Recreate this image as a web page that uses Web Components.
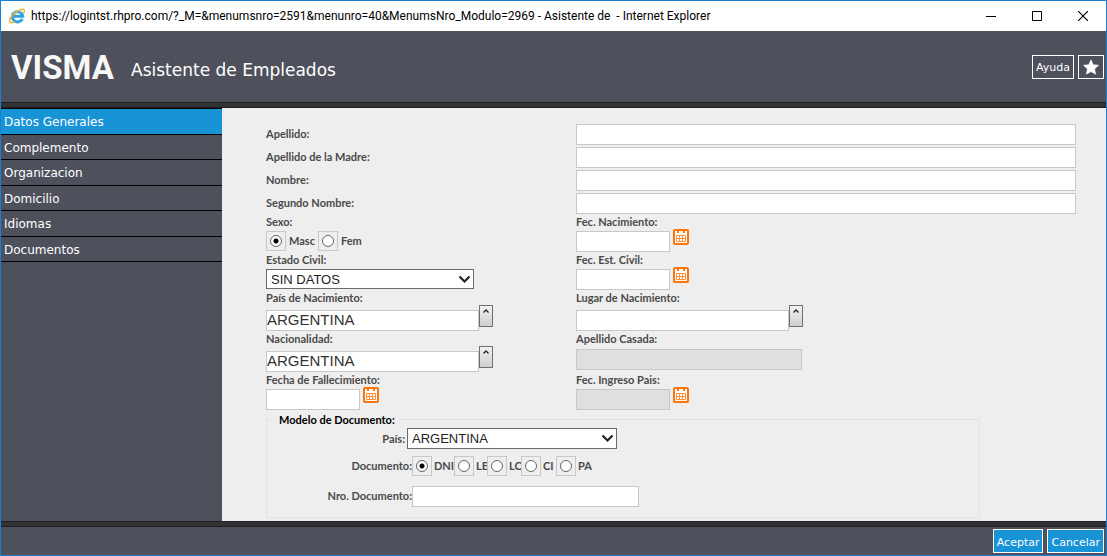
<!DOCTYPE html>
<html lang="es">
<head>
<meta charset="utf-8">
<title>Asistente de Empleados</title>
<style>
body { margin: 0; }
</style>
</head>
<body>
<app-window></app-window>
<script>
const define = (name, html, setup) => {
  const template = document.createElement('template');
  template.innerHTML = html;
  customElements.define(name, class extends HTMLElement {
    constructor() {
      super();
      this.attachShadow({ mode: 'open' }).append(template.content.cloneNode(true));
    }
    connectedCallback() {
      if (setup && !this.ready) { this.ready = true; setup(this, this.shadowRoot); }
    }
  });
};

const labelCss = `
  label, .caption { font: 700 11px/15px Lato, "Liberation Sans", sans-serif; color: #4a4a4a; white-space: nowrap; }
`;
const inputCss = `
  input { box-sizing: border-box; height: 21px; margin: 0; padding: 0 0 2px; border: 1px solid #c8c8c8; border-radius: 0;
    background: #fff; color: #333; font: 15px "Liberation Sans", sans-serif; outline: none; }
  input:disabled { background: #dfdfdd; }
`;

/* Window caption */
define('title-bar', `
<style>
  :host { display: flex; align-items: center; height: 30px; padding-left: 8px; background: #fff; color: #000;
    font: 12px Roboto, sans-serif; }
  svg { display: block; }
  .title { flex: 1; margin-left: 5px; white-space: pre; overflow: hidden; }
  button { display: grid; place-items: center; width: 46px; height: 30px; padding: 0; border: 0; background: none; }
</style>
<svg width="17" height="16" viewBox="0 0 17 16" fill="none" aria-hidden="true">
  <path d="M13.300 10.800a5.200 5.200 0 1 1 .4-2.600H4.500" stroke="#2fa3e4" stroke-width="3"/>
  <path d="M4.200 4.400a5.600 5.600 0 0 1 8.600.2" stroke="#8ad6f7" stroke-width="1"/>
  <path d="M2.500 8.500C-1 13.500.8 16.500 6 13.600M2.500 8.500C5 5 10 1.500 13.500 1.200c2.300-.1 2.300 1.800 1.200 4" stroke="#f0b02c" stroke-width="1.400"/>
</svg>
<span class="title"><slot></slot></span>
<button aria-label="Minimizar"><svg width="10" height="10"><path d="M0 5.5h10" stroke="#000"/></svg></button>
<button aria-label="Maximizar"><svg width="10" height="10"><path d="M.5.5h9v9h-9z" fill="none" stroke="#000"/></svg></button>
<button aria-label="Cerrar"><svg width="10" height="10"><path d="M0 0l10 10M10 0L0 10" stroke="#000" stroke-width="1.200"/></svg></button>
`);

define('action-button', `
<style>
  :host { display: block; }
  button { display: grid; place-items: center; box-sizing: border-box; height: 24px; min-width: 26px; padding: 2px 3px 0;
    border: 1px solid #fff; background: var(--button-fill, #4e515c); color: #fff; font: 11px "DejaVu Sans", sans-serif; }
</style>
<button><slot></slot></button>
`, (el, root) => {
  if (el.getAttribute('label')) root.querySelector('button').setAttribute('aria-label', el.getAttribute('label'));
});

define('app-header', `
<style>
  :host { display: flex; align-items: center; height: 71px; padding: 0 2px 0 10px; background: #4e515c; color: #fff; }
  .logo { width: 100px; margin-top: 2px; font: 700 33px/44px Roboto, sans-serif; color: #f7f7f7; }
  h1 { flex: 1; margin: 6px 0 0 20px; font: 17px/22px "DejaVu Sans", sans-serif; white-space: nowrap; }
  nav { display: flex; gap: 4px; }
  svg { display: block; margin-bottom: 2px; }
</style>
<span class="logo">VISMA</span>
<h1>Asistente de Empleados</h1>
<nav>
  <action-button>Ayuda</action-button>
  <action-button label="Favoritos"><svg width="16" height="16" viewBox="0 0 16 16"><path fill="#fff" stroke="#fff" stroke-width=".6" stroke-linejoin="round" d="M8 .8l2.200 4.900 5.300.6-3.900 3.600 1 5.300L8 12.600l-4.600 2.600 1-5.300L.5 6.300l5.300-.6z"/></svg></action-button>
</nav>
`);

define('side-menu', `
<style>
  :host { display: block; width: 20%; background: #4e515c; border-top: 1px solid #000; box-sizing: border-box; }
  a { display: block; box-sizing: border-box; height: 25px; padding-left: 3px; border-bottom: 1px solid #000;
    color: #fff; text-decoration: none; font: 12px/26px "DejaVu Sans", sans-serif; }
  a:nth-child(odd) { height: 26px; }
  a[aria-current] { background: #1893d6; }
</style>
<nav></nav>
`, (el, root) => {
  el.getAttribute('items').split('|').forEach((text, i) => {
    const a = document.createElement('a');
    a.href = '#';
    a.textContent = text;
    if (i === 0) a.setAttribute('aria-current', 'page');
    root.querySelector('nav').append(a);
  });
});

/* Caption beside a text box that fills the row */
define('text-row', `
<style>
  :host { display: grid; grid-template-columns: var(--caption-width, 310px) minmax(0, 1fr); align-items: center; }
  ${labelCss} ${inputCss}
  label { padding-bottom: 2px; text-align: var(--caption-align, left); }
</style>
<label for="box"></label><input id="box" type="text">
`, (el, root) => { root.querySelector('label').textContent = el.getAttribute('label'); });

/* Caption above a text box */
define('text-field', `
<style>
  :host { display: block; }
  ${labelCss} ${inputCss}
  label { display: block; }
  .control { display: flex; align-items: flex-end; height: 24px; }
  input { width: 226px; }
</style>
<label for="box"></label><div class="control"><input id="box" type="text"></div>
`, (el, root) => {
  root.querySelector('label').textContent = el.getAttribute('label');
  root.querySelector('input').disabled = el.hasAttribute('disabled');
});

define('date-field', `
<style>
  :host { display: block; }
  ${labelCss} ${inputCss}
  label { display: block; }
  .control { display: flex; align-items: flex-end; gap: 3px; height: 23px; }
  input { width: 94px; }
  button { align-self: flex-start; padding: 0; border: 0; background: none; }
  svg { display: block; }
</style>
<label for="box"></label>
<div class="control">
  <input id="box" type="text">
  <button aria-label="Calendario"><svg width="16" height="16" viewBox="0 0 16 16">
    <rect x="1" y="1" width="14" height="14" rx="1" fill="#fff" stroke="#ff7508" stroke-width="2"/>
    <path fill="#ff7508" d="M4 1h2v3H4zM10 1h2v3h-2z"/>
    <path fill="none" stroke="#ff8f3a" d="M3.500 6.500h9v6h-9zM3.500 9.500h9M6.500 6.500v6M9.500 6.500v6"/>
  </svg></button>
</div>
`, (el, root) => {
  root.querySelector('label').textContent = el.getAttribute('label');
  root.querySelector('input').disabled = el.hasAttribute('disabled');
});

/* Text box with a lookup button at its right */
define('lookup-field', `
<style>
  :host { display: block; }
  ${labelCss} ${inputCss}
  label { display: block; }
  .control { display: flex; align-items: flex-end; height: 26px; }
  input { width: 213px; }
  button { align-self: flex-start; box-sizing: border-box; width: 14px; height: 22px; padding: 0; border: 1px solid #707070;
    background: linear-gradient(#f2f2f2, #cfcfcf); }
  svg { display: block; margin: 0 auto 10px; }
</style>
<label for="box"></label>
<div class="control">
  <input id="box" type="text">
  <button aria-label="Buscar"><svg width="6" height="4"><path d="M.5 3.500L3 1l2.500 2.500" fill="none" stroke="#222" stroke-width="1.300"/></svg></button>
</div>
`, (el, root) => {
  root.querySelector('label').textContent = el.getAttribute('label');
  root.querySelector('input').value = el.getAttribute('value') || '';
});

define('select-field', `
<style>
  :host { display: block; }
  :host([beside]) { display: grid; grid-template-columns: 138px 210px; gap: 2px; align-items: center; }
  ${labelCss}
  label { display: block; }
  :host([beside]) label { text-align: right; }
  .control { display: grid; width: 208px; padding: 2px 0 1px; }
  :host([beside]) .control { width: auto; padding: 0; }
  select, svg { grid-area: 1 / 1; }
  select { appearance: none; box-sizing: border-box; height: 20px; margin: 0; padding: 0 4px; border: 1px solid #6b6b6b; border-radius: 0;
    background: #fff; color: #222; font: 13px "Liberation Sans", sans-serif; }
  :host([beside]) select { height: 21px; }
  svg { justify-self: end; align-self: center; margin-right: 3px; pointer-events: none; }
</style>
<label for="list"></label>
<div class="control">
  <select id="list"><option></option></select>
  <svg width="13" height="9"><path d="M1.500 1.500l5 5 5-5" fill="none" stroke="#222" stroke-width="2.200"/></svg>
</div>
`, (el, root) => {
  root.querySelector('label').textContent = el.getAttribute('label');
  root.querySelector('option').textContent = el.getAttribute('value');
});

define('radio-field', `
<style>
  :host { display: block; }
  fieldset { display: block; margin: 0; padding: 0; border: 0; min-width: 0; }
  ${labelCss}
  .caption { display: block; }
  .options { display: grid; grid-template-columns: 52px 52px; padding: 2px 0 1px; }
  label { display: flex; align-items: center; gap: 3px; }
  span { padding-bottom: 2px; }
  .options span { padding-bottom: 1px; }
  :host([beside]) fieldset { display: grid; grid-template-columns: 145px 1fr; align-items: center; }
  :host([beside]) .caption { text-align: right; }
  :host(:not([beside])) .caption { padding: 0; }
  :host([beside]) .options { grid-template-columns: 42px 33px 34px 35px 42px; padding: 0; }
  :host([beside]) label { gap: 2px; }
  input { appearance: none; flex: none; display: grid; place-items: center; box-sizing: border-box; width: 20px; height: 20px;
    margin: 0; border: 1px solid #c8c8c8; }
  input::before { content: ""; box-sizing: border-box; width: 12px; height: 12px; border: 1px solid #666; border-radius: 50%; background: #fff; }
  input:checked::before { background: radial-gradient(circle, #000 2px, #fff 3px); }
</style>
<fieldset role="radiogroup" aria-labelledby="caption"><span class="caption" id="caption"></span><div class="options"></div></fieldset>
`, (el, root) => {
  root.querySelector('.caption').textContent = el.getAttribute('label');
  el.getAttribute('options').split('|').forEach((text, i) => {
    const label = document.createElement('label');
    const input = Object.assign(document.createElement('input'), { type: 'radio', name: 'choice', value: text, checked: i === 0 });
    const span = document.createElement('span');
    span.textContent = text;
    label.append(input, span);
    root.querySelector('.options').append(label);
  });
});

define('document-group', `
<style>
  :host { display: block; }
  fieldset { box-sizing: border-box; max-width: 714px; margin: 1px 0 0; padding: 0 0 10px; border: 1px solid #e3e3e3; }
  legend { margin-left: 8px; padding: 0 4px; font: 700 11px/17px Lato, "Liberation Sans", sans-serif; color: #000; }
  radio-field { margin: 7px 0 10px; }
  text-row { --caption-width: 145px; --caption-align: right; width: 372px; }
</style>
<fieldset>
  <legend>Modelo de Documento:</legend>
  <select-field beside label="País:" value="ARGENTINA"></select-field>
  <radio-field beside label="Documento:" options="DNI|LE|LC|CI|PA"></radio-field>
  <text-row label="Nro. Documento:"></text-row>
</fieldset>
`);

define('employee-form', `
<style>
  :host { display: block; flex: 1; min-width: 0; box-sizing: border-box; padding: 16px 30px 2px 44px; background: #eee; }
  .names { display: grid; gap: 2px; }
  .details { display: grid; grid-template-columns: 310px minmax(0, 1fr); }
</style>
<div class="names">
  <text-row label="Apellido:"></text-row>
  <text-row label="Apellido de la Madre:"></text-row>
  <text-row label="Nombre:"></text-row>
  <text-row label="Segundo Nombre:"></text-row>
</div>
<div class="details">
  <radio-field label="Sexo:" options="Masc|Fem"></radio-field>
  <date-field label="Fec. Nacimiento:"></date-field>
  <select-field label="Estado Civil:" value="SIN DATOS"></select-field>
  <date-field label="Fec. Est. Civil:"></date-field>
  <lookup-field label="País de Nacimiento:" value="ARGENTINA"></lookup-field>
  <lookup-field label="Lugar de Nacimiento:"></lookup-field>
  <lookup-field label="Nacionalidad:" value="ARGENTINA"></lookup-field>
  <text-field label="Apellido Casada:" disabled></text-field>
  <date-field label="Fecha de Fallecimiento:"></date-field>
  <date-field label="Fec. Ingreso Pais:" disabled></date-field>
</div>
<document-group></document-group>
`);

define('app-footer', `
<style>
  :host { display: flex; justify-content: flex-end; gap: 4px; height: 26px; padding: 2px 2px 0; background: #4e515c; --button-fill: #1893d6; }
</style>
<action-button>Aceptar</action-button>
<action-button>Cancelar</action-button>
`);

define('app-window', `
<style>
  :host { display: flex; flex-direction: column; box-sizing: border-box; min-height: 100vh; border: 1px solid #1a7fd6; }
  .rule { box-sizing: border-box; height: 6px; background: #333; border: solid #202024; border-width: 1px 0; }
  .body { flex: 1; display: flex; }
</style>
<title-bar>https://logintst.rhpro.com/?_M=&amp;menumsnro=2591&amp;menunro=40&amp;MenumsNro_Modulo=2969 - Asistente de  - Internet Explorer</title-bar>
<app-header></app-header>
<div class="rule"></div>
<div class="body">
  <side-menu items="Datos Generales|Complemento|Organizacion|Domicilio|Idiomas|Documentos"></side-menu>
  <employee-form></employee-form>
</div>
<div class="rule"></div>
<app-footer></app-footer>
`);
</script>
</body>
</html>
